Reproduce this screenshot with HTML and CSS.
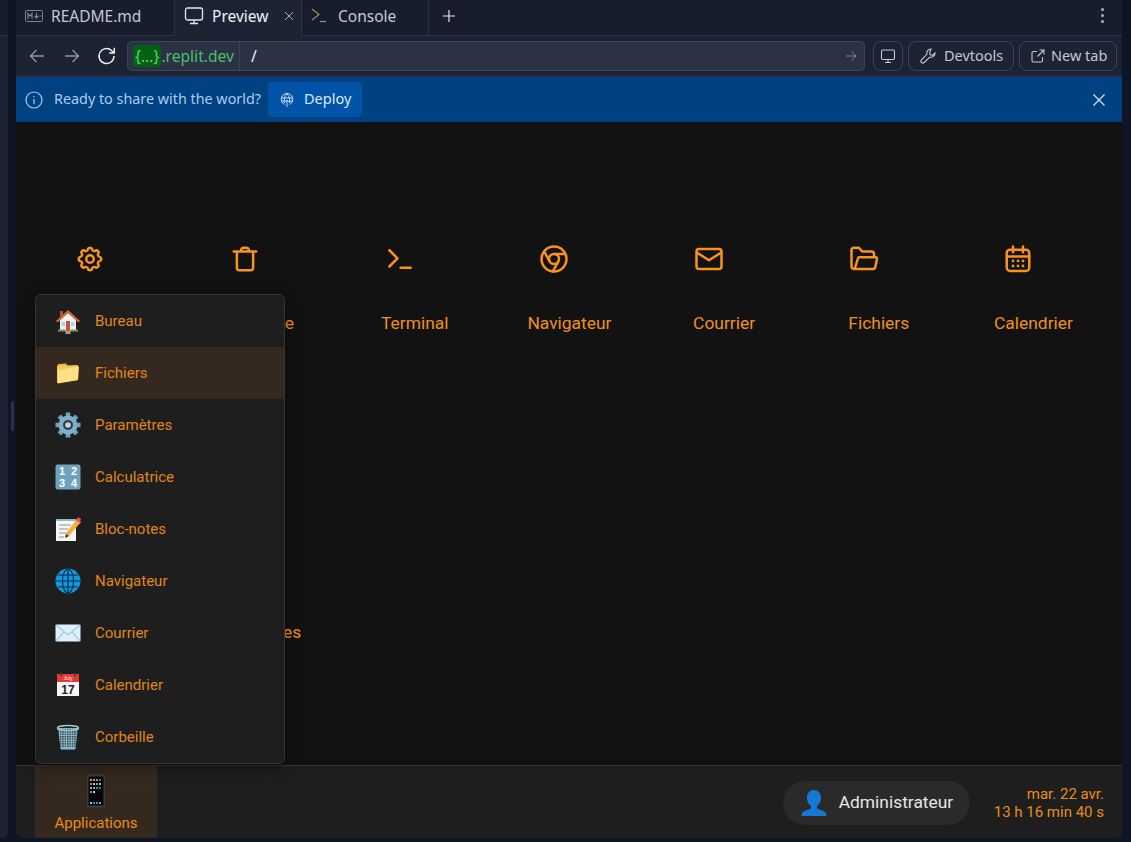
FILE: index.html
```html
<!DOCTYPE html>
<html lang="fr">
<head>
    <meta charset="UTF-8">
    <title>Preview</title>
    <link rel="stylesheet" href="styles.css">
</head>
<body>
    <svg width="0" height="0" class="defs">
        <defs>
            <symbol id="e-house" viewBox="0 0 26 26">
                <path d="M5 12 13 5l8 7v11H5z" fill="#eef1ee"/>
                <path d="M1 13 13 2l12 11-1.500 1.500L13 5 2.500 14.500z" fill="#d9683a"/>
                <path d="M5 3h3v4l-3 3z" fill="#b9502c"/>
                <path d="M6.500 14h3.500v4H6.500zM16 14h3.500v4H16z" fill="#a9d5e6"/>
                <path d="M11 13h4v10h-4z" fill="#c4573a"/>
                <path d="M3 21.500h7.500v2H3zM15.500 21.500H23v2h-7.500z" fill="#7a9a55"/>
                <path d="M10.500 23h5v3h-5z" fill="#9b9b9b"/>
            </symbol>
            <symbol id="e-folder" viewBox="0 0 26 26">
                <path d="M2 7 3 4l8-.500 2 2.500z" fill="#e9b44c"/>
                <path d="M2 6l21-1v15L2 23z" fill="#f5c85c"/>
                <path d="M3 10 24 6.500l-1 13.500-20 3.500z" fill="#ffe083"/>
            </symbol>
            <symbol id="e-gear" viewBox="0 0 26 26">
                <path d="M13 0.500v25M0.500 13h25M4.200 4.200l17.600 17.600M21.800 4.200 4.200 21.800" stroke="#6fa3bd" stroke-width="4.600"/>
                <circle cx="13" cy="13" r="9.500" fill="#7fb0c9"/>
                <circle cx="13" cy="13" r="5" fill="#2f3c44"/>
                <circle cx="13" cy="13" r="2.800" fill="#c6d6df"/>
            </symbol>
            <symbol id="e-numbers" viewBox="0 0 26 26">
                <rect x="0.500" y="0.500" width="25" height="25" rx="2" fill="#6fa3bd"/>
                <text x="7" y="11" class="emoji-digit">1</text>
                <text x="19" y="11" class="emoji-digit">2</text>
                <text x="7" y="23" class="emoji-digit">3</text>
                <text x="19" y="23" class="emoji-digit">4</text>
            </symbol>
            <symbol id="e-memo" viewBox="0 0 26 26">
                <path d="M1 3h20v22H1z" fill="#f4f6f8"/>
                <path d="M1 3h20v2H1z" fill="#8db9cf"/>
                <path d="M4 9h12M4 13h9M4 17h7M4 21h5" stroke="#8a939a" stroke-width="1"/>
                <path d="M10 22 11 17 22 3l4 3-12 14z" fill="#f5b03e"/>
                <path d="M21 4l2-3 3 2-2 4z" fill="#e2574c"/>
                <path d="M10 22l1-4 3 2z" fill="#3a3a3a"/>
            </symbol>
            <symbol id="e-globe" viewBox="0 0 26 26">
                <circle cx="13" cy="13" r="12.500" fill="#0a9be2"/>
                <g fill="none" stroke="#12243a" stroke-width="1.100">
                    <ellipse cx="13" cy="13" rx="5.500" ry="12"/>
                    <path d="M13 1v24M1 13h24M3 7h20M3 19h20"/>
                </g>
            </symbol>
            <symbol id="e-mail" viewBox="0 0 26 26">
                <rect x="0.500" y="4.500" width="25" height="17" rx="1" fill="#dff0fb"/>
                <path d="M1 5 13 15 25 5M1 21l8-9M25 21l-8-9" fill="none" stroke="#9cc9e6" stroke-width="1.200"/>
            </symbol>
            <symbol id="e-cal" viewBox="0 0 26 26">
                <path d="M2 2h22v22H2z" fill="#f5f5f5"/>
                <path d="M2 2h22v8H2z" fill="#e53935"/>
                <path d="M6 1v3M20 1v3" stroke="#37474f" stroke-width="2"/>
                <text x="13" y="8" class="emoji-month">July</text>
                <text x="13" y="21.500" class="emoji-day">17</text>
            </symbol>
            <symbol id="e-bin" viewBox="0 0 26 26">
                <pattern id="mesh" width="2.400" height="2.400" patternUnits="userSpaceOnUse">
                    <rect width="2.400" height="2.400" fill="#8fb8c8"/>
                    <rect width="1.400" height="1.400" fill="#26343c"/>
                </pattern>
                <path d="M3 4h20l-2.500 21h-15z" fill="url(#mesh)"/>
                <ellipse cx="13" cy="4" rx="10.500" ry="2.500" fill="none" stroke="#9cc7d6" stroke-width="1.600"/>
                <path d="M5.500 23h15l-.5 2.500H6z" fill="#86bccd"/>
            </symbol>
            <symbol id="e-phone" viewBox="0 0 26 34">
                <rect x="4" y="0.500" width="18" height="33" rx="2.500" fill="#3a3f44"/>
                <rect x="5.500" y="2.500" width="15" height="29" fill="#05070a"/>
                <g>
                    <path d="M7 5h2v2H7z" fill="#f59e2c"/><path d="M10 5h2v2h-2z" fill="#f5842c"/><path d="M13 5h2v2h-2z" fill="#f06a9c"/><path d="M16 5h2v2h-2z" fill="#1e88d0"/>
                    <path d="M7 9h2v2H7z" fill="#2ca7e0"/><path d="M10 9h2v2h-2z" fill="#7fd0ea"/><path d="M13 9h2v2h-2z" fill="#49b97a"/><path d="M16 9h2v2h-2z" fill="#f5b03e"/>
                    <path d="M7 13h2v2H7z" fill="#f59e2c"/><path d="M10 13h2v2h-2z" fill="#f06a9c"/><path d="M13 13h2v2h-2z" fill="#12a89a"/><path d="M16 13h2v2h-2z" fill="#1e88d0"/>
                    <path d="M7 17h2v2H7z" fill="#2ca7e0"/><path d="M10 17h2v2h-2z" fill="#9cd8ee"/>
                    <path d="M7 28h2v2H7z" fill="#7fd0ea"/><path d="M10 28h2v2h-2z" fill="#1e88d0"/><path d="M13 28h2v2h-2z" fill="#12a89a"/><path d="M16 28h2v2h-2z" fill="#f06a9c"/>
                </g>
            </symbol>
        </defs>
    </svg>

    <div class="rail"><div class="rail-head"></div></div>
    <div class="gutter"><span class="grip"></span></div>

    <div class="panel">
        <div class="tabs">
            <div class="tab">
                <svg class="tab-ico" width="20" height="20" viewBox="0 0 20 20" fill="none" stroke="#7e8694"><rect x="1.500" y="4.500" width="17" height="11" rx="1"/><path d="M4 13V7.500l2 2.500 2-2.500V13M12.500 7v5m-2-2 2 2 2-2M15.500 10h1.500" stroke-width="1.200"/></svg>
                <span>README.md</span>
            </div>
            <div class="tab tab-on">
                <svg class="tab-ico" width="20" height="20" viewBox="0 0 20 20" fill="none" stroke="#e4e7ec" stroke-width="1.300"><rect x="1.500" y="2" width="17" height="12" rx="2"/><path d="M10 14v3.500M6 17.500h8"/></svg>
                <span>Preview</span>
                <svg class="tab-x" width="10" height="10" viewBox="0 0 10 10" stroke="#aab1bd"><path d="M1 1l8 8M9 1l-8 8"/></svg>
            </div>
            <div class="tab tab-console">
                <svg class="tab-ico" width="20" height="20" viewBox="0 0 20 20" fill="none" stroke-width="1.200"><path d="M2 3l7 5.500-7 5.500" stroke="#a08d5c"/><path d="M10 15.500h6" stroke="#8a93a1"/></svg>
                <span>Console</span>
            </div>
            <div class="tab-plus">
                <svg width="12" height="12" viewBox="0 0 12 12" stroke="#e4e7ec" stroke-width="1.200"><path d="M6 0v12M0 6h12"/></svg>
            </div>
            <div class="tab-more">
                <span></span><span></span><span></span>
            </div>
        </div>

        <div class="toolbar">
            <button class="nav-btn">
                <svg width="16" height="16" viewBox="0 0 16 16" fill="none" stroke="#8f97a5" stroke-width="1.300"><path d="M15 8H1.500M7.500 2 1.500 8l6 6"/></svg>
            </button>
            <button class="nav-btn">
                <svg width="16" height="16" viewBox="0 0 16 16" fill="none" stroke="#8f97a5" stroke-width="1.300"><path d="M1 8h13.500M8.500 2l6 6-6 6"/></svg>
            </button>
            <button class="nav-btn">
                <svg width="20" height="20" viewBox="0 0 20 20" fill="none" stroke="#eef0f3" stroke-width="1.400"><path d="M17 10a7.500 7.500 0 1 1-2.200-5.300L17 7M17.300 1.800V7h-5.200"/></svg>
            </button>
            <div class="url">
                <div class="url-host"><span class="url-id">{...}</span>.replit.dev</div>
                <div class="url-path">/</div>
                <svg width="12" height="12" viewBox="0 0 12 12" fill="none" stroke="#7e8694"><path d="M1 6h10M6.500 1.500 11 6l-4.500 4.500"/></svg>
            </div>
            <button class="tool-btn tool-square">
                <svg width="16" height="16" viewBox="0 0 16 16" fill="none" stroke="#c2c8d2" stroke-width="1.100"><rect x="1.500" y="2" width="13" height="9.500" rx="1.500"/><path d="M8 11.500v3M5 14.500h6"/></svg>
            </button>
            <button class="tool-btn tool-dev">
                <svg width="16" height="16" viewBox="0 0 16 16" fill="none" stroke="#c2c8d2" stroke-width="1.100"><path d="M11 1a4 4 0 0 0-4 5.200L1.500 11.800a1.900 1.900 0 0 0 2.700 2.700l5.600-5.500A4 4 0 0 0 15 5l-2.500 2.300-2.300-.5-.5-2.300z"/></svg>
                <span>Devtools</span>
            </button>
            <button class="tool-btn tool-new">
                <svg width="14" height="14" viewBox="0 0 14 14" fill="none" stroke="#c2c8d2" stroke-width="1.100"><path d="M6 2.500H2.500a1.500 1.500 0 0 0-1.500 1.500v7.500A1.500 1.500 0 0 0 2.500 13H10a1.500 1.500 0 0 0 1.500-1.500V8M6.500 7.500 13 1M8.500 1H13v4.500"/></svg>
                <span>New tab</span>
            </button>
        </div>

        <div class="banner">
            <svg class="banner-info" width="18" height="18" viewBox="0 0 18 18" fill="none" stroke="#a9cdf0" stroke-width="1.200"><circle cx="9" cy="9" r="8"/><path d="M9 8v5M9 5v1.300"/></svg>
            <span class="banner-text">Ready to share with the world?</span>
            <button class="deploy">
                <svg width="14" height="14" viewBox="0 0 14 14" fill="none" stroke="#dbe9f7" stroke-width="0.900"><path d="M4.500 11.500A5.800 5.800 0 1 1 9.500 11.500"/><path d="M1.500 5h11M1.500 8h3M9.500 8h3M7 1C4.500 3 4 6 4.500 10M7 1c2.500 2 3 5 2.500 9"/><path d="M7 14V7M5 9l2-2 2 2"/></svg>
                <span>Deploy</span>
            </button>
            <svg class="banner-x" width="12" height="12" viewBox="0 0 12 12" stroke="#cfe3f7" stroke-width="1.300"><path d="M0.500 0.500l11 11M11.500 0.500l-11 11"/></svg>
        </div>

        <div class="os">
            <div class="desktop">
                <div class="shortcut">
                    <svg class="sc-ico" viewBox="0 0 24 24"><path d="M10.300 4.300c.4-1.800 3-1.800 3.400 0a1.700 1.700 0 0 0 2.600 1.100c1.500-.9 3.300.8 2.300 2.300a1.700 1.700 0 0 0 1.100 2.600c1.800.4 1.800 3 0 3.400a1.700 1.700 0 0 0-1.100 2.600c.9 1.500-.8 3.300-2.300 2.300a1.700 1.700 0 0 0-2.600 1.100c-.4 1.800-3 1.800-3.400 0a1.700 1.700 0 0 0-2.600-1.100c-1.500.9-3.300-.8-2.300-2.300a1.700 1.700 0 0 0-1.100-2.600c-1.800-.4-1.800-3 0-3.400a1.700 1.700 0 0 0 1.100-2.600c-.9-1.500.8-3.300 2.300-2.300a1.700 1.700 0 0 0 2.600-1.100z"/><circle cx="12" cy="12" r="3"/></svg>
                    <span>Paramètres</span>
                </div>
                <div class="shortcut">
                    <svg class="sc-ico" viewBox="0 0 24 24"><path d="M3 6h18M9 6V4.500A2 2 0 0 1 11 3h2a2 2 0 0 1 2 1.500V6M5.500 6v13a2 2 0 0 0 2 2h9a2 2 0 0 0 2-2V6"/></svg>
                    <span>Corbeille</span>
                </div>
                <div class="shortcut">
                    <svg class="sc-ico" viewBox="0 0 24 24"><path d="M3.500 5l6.500 6.500-6.500 6.500M12.500 19h8"/></svg>
                    <span>Terminal</span>
                </div>
                <div class="shortcut">
                    <svg class="sc-ico" viewBox="0 0 24 24"><circle cx="12" cy="12" r="10"/><circle cx="12" cy="12" r="4"/><path d="M12 8h9M8.500 14 4.200 6M15.500 14 11 22"/></svg>
                    <span>Navigateur</span>
                </div>
                <div class="shortcut">
                    <svg class="sc-ico" viewBox="0 0 24 24"><rect x="2" y="4" width="20" height="16" rx="2"/><path d="M2.500 7 12 13l9.500-6"/></svg>
                    <span>Courrier</span>
                </div>
                <div class="shortcut">
                    <svg class="sc-ico" viewBox="0 0 24 24"><path d="M4.500 20H19a2 2 0 0 0 2-1.500l1.300-6a1.500 1.500 0 0 0-1.500-2H9a2 2 0 0 0-2 1.500l-2.500 8zM4.500 20A2.500 2.500 0 0 1 2 18V5a2 2 0 0 1 2-2h4l2.500 3H18a2 2 0 0 1 2 2v2.500"/></svg>
                    <span>Fichiers</span>
                </div>
                <div class="shortcut">
                    <svg class="sc-ico" viewBox="0 0 24 24"><rect x="3" y="4.500" width="18" height="17" rx="2.500"/><path d="M3 10h18M8 2v4.500M16 2v4.500"/><path class="sc-dots" d="M8 13.500h.01M12 13.500h.01M16 13.500h.01M8 17.500h.01M12 17.500h.01M16 17.500h.01"/></svg>
                    <span>Calendrier</span>
                </div>
                <div class="shortcut shortcut-low"></div>
                <div class="shortcut shortcut-low">
                    <span>Bloc-notes</span>
                </div>
            </div>

            <div class="taskbar">
                <div class="start">
                    <svg class="start-ico" width="26" height="34"><use href="#e-phone"/></svg>
                    <span>Applications</span>
                </div>
                <div class="user">
                    <svg width="28" height="28" viewBox="0 0 28 28" fill="#1478d4"><path d="M14 1c4.500 0 7 3.500 7 8 0 3.500-1.500 6.500-4 8v2c0 1 5 2 8 4 1.500 1 1.500 3.500 1.500 4H1.500c0-.5 0-3 1.500-4 3-2 8-3 8-4v-2c-2.500-1.500-4-4.500-4-8 0-4.500 2.500-8 7-8z"/></svg>
                    <span>Administrateur</span>
                </div>
                <div class="clock">
                    <div>mar. 22 avr.</div>
                    <div>13 h 16 min 40 s</div>
                </div>
            </div>

            <div class="menu">
                <div class="menu-item"><svg class="emoji"><use href="#e-house"/></svg><span>Bureau</span></div>
                <div class="menu-item menu-on"><svg class="emoji"><use href="#e-folder"/></svg><span>Fichiers</span></div>
                <div class="menu-item"><svg class="emoji"><use href="#e-gear"/></svg><span>Paramètres</span></div>
                <div class="menu-item"><svg class="emoji"><use href="#e-numbers"/></svg><span>Calculatrice</span></div>
                <div class="menu-item"><svg class="emoji"><use href="#e-memo"/></svg><span>Bloc-notes</span></div>
                <div class="menu-item"><svg class="emoji"><use href="#e-globe"/></svg><span>Navigateur</span></div>
                <div class="menu-item"><svg class="emoji"><use href="#e-mail"/></svg><span>Courrier</span></div>
                <div class="menu-item"><svg class="emoji"><use href="#e-cal"/></svg><span>Calendrier</span></div>
                <div class="menu-item"><svg class="emoji"><use href="#e-bin"/></svg><span>Corbeille</span></div>
            </div>
        </div>
    </div>
</body>
</html>
```

FILE: styles.css
```css
* { box-sizing: border-box; }
html, body { height: 100%; }
body {
    margin: 0; display: flex; height: 842px; overflow: hidden;
    background: #0e1525; font-family: "Noto Sans", "Open Sans", sans-serif;
}
button { font-family: inherit; cursor: pointer; }
svg { flex: none; }
.defs { position: absolute; }

.rail { width: 8px; height: 838px; background: #1c2333; border-radius: 0 0 6px 0; }
.rail-head { height: 36px; background: #171d2d; border-bottom: 1px solid #2b3245; }
.gutter { width: 8px; display: flex; align-items: center; justify-content: center; padding-bottom: 10px; }
.grip { width: 3px; height: 30px; background: #2b3245; border-radius: 2px; }

.panel {
    width: 1106px; height: 838px; display: flex; flex-direction: column;
    background: #1c2333; border-radius: 0 0 6px 6px; overflow: hidden;
}

/* tab bar */
.tabs {
    height: 36px; flex: none; display: flex; align-items: stretch;
    background: #171d2d; border-bottom: 1px solid #2b3245; color: #c2c8d2; font-size: 15.5px;
}
.tab { display: flex; align-items: center; gap: 7px; padding-bottom: 4px; border-right: 1px solid #2b3245; }
.tab:first-child { width: 159px; padding-left: 8px; }
.tab-on {
    width: 127px; padding-left: 9px; gap: 8px; color: #f0f1f4;
    background: #1c2333; margin-bottom: -1px;
}
.tab-x { margin-left: 8px; }
.tab-console { width: 127px; padding-left: 8px; gap: 8px; }
.tab-plus { width: 40px; padding-bottom: 4px; display: flex; align-items: center; justify-content: center; }
.tab-more { margin-left: auto; width: 40px; padding-bottom: 4px; display: flex; flex-direction: column; align-items: center; justify-content: center; gap: 3px; }
.tab-more span { width: 3px; height: 3px; border-radius: 50%; background: #aab1bd; }

/* address bar */
.toolbar {
    height: 41px; flex: none; padding: 5px 5px 5px 3px; display: flex; align-items: center;
    background: #1c2333; border-bottom: 1px solid #2b3245;
}
.nav-btn { width: 35px; height: 30px; padding: 0; border: 0; background: none; display: flex; align-items: center; justify-content: center; }
.url {
    width: 738px; height: 30px; margin: 0 8px 0 3px; display: flex; align-items: center; padding-right: 7px;
    background: #2b3245; border: 1px solid #3c445c; border-radius: 5px; font-size: 15.6px;
}
.url-host { height: 100%; padding-left: 5px; padding-right: 5px; display: flex; align-items: center; color: #4ebe6a; border-right: 1px solid #3c445c; }
.url-id { height: 22px; padding: 0 2px; display: flex; align-items: center; background: #046113; border-radius: 4px; color: #58d672; }
.url-path { flex: 1; padding-left: 11px; color: #f0f1f4; }
.tool-btn {
    height: 30px; display: flex; align-items: center; background: none; padding: 0 11px; white-space: nowrap;
    border: 1px solid #3c445c; border-radius: 8px; color: #c2c8d2; font-size: 14.5px;
}
.tool-btn span { padding-bottom: 3px; }
.tool-square { width: 30px; padding: 0; justify-content: center; margin-right: 5px; }
.tool-dev { width: 106px; gap: 8px; margin-right: 5px; }
.tool-new { width: 98px; gap: 6px; }

/* deploy banner */
.banner {
    height: 45px; flex: none; display: flex; align-items: center; padding: 0 17px 0 9px;
    background: #004182; color: #a9cdf0; font-size: 14.35px;
}
.banner-info { margin-right: 11px; }
.banner-text { margin-right: 7px; padding-bottom: 3px; }
.deploy {
    height: 35px; width: 94px; display: flex; align-items: center; gap: 10px; padding: 0 0 0 12px;
    background: #0053a6; border: 0; border-radius: 4px; color: #dbe9f7; font-size: 14.5px;
}
.deploy span { padding-bottom: 3px; }
.banner-x { margin-left: auto; }

/* fake os */
.os { position: relative; flex: 1; min-height: 0; display: flex; flex-direction: column; background: #121212; font-family: Roboto, sans-serif; }
.desktop {
    flex: 1; min-height: 0; overflow: hidden; display: grid; grid-template-columns: repeat(7, 154.7px); grid-auto-rows: 309px;
    padding: 122px 0 0 12px; align-content: start; color: #f0901e; font-size: 17.4px;
}
.shortcut { display: flex; flex-direction: column; align-items: center; height: 90px; }
.shortcut > span:last-child { line-height: 20px; }
.sc-ico {
    width: 30px; height: 30px; margin: 0 30px 39px 0;
    fill: none; stroke: #f7931e; stroke-width: 2; stroke-linecap: round; stroke-linejoin: round;
}
.sc-dots { stroke-width: 2.200; }
.shortcut-low { padding-top: 69px; }

.taskbar {
    height: 73px; flex: none; display: flex; align-items: stretch; padding-left: 19px;
    background: #1e1e1e; border-top: 1px solid #333;
}
.start {
    width: 122px; display: flex; flex-direction: column; align-items: center; padding-top: 8px;
    background: #35291f; color: #ea8c1c; font-size: 15px;
}
.start-ico { margin-bottom: 6px; }
.user {
    width: 187px; height: 44px; margin: 15px 24px 0 auto; display: flex; align-items: center; gap: 11px; padding-left: 17px;
    background: #2a2a2a; border-radius: 22px; color: #e6e6e6; font-size: 17.4px;
}
.user span { padding-bottom: 2px; }
.clock { margin: 19px 18px 0 0; text-align: right; color: #ea8c1c; font-size: 15px; line-height: 18px; }

.menu {
    position: absolute; left: 19px; top: 172px; width: 250px;
    background: #1e1e1e; border: 1px solid #333; border-radius: 6px; overflow: hidden;
    box-shadow: 0 4px 16px rgba(0, 0, 0, 0.4); color: #e0861c; font-size: 15px;
}
.menu-item { height: 52px; display: flex; align-items: center; padding-left: 19px; gap: 14px; }
.menu-on { background: #35291f; }
.emoji { width: 26px; height: 26px; flex: none; }
.emoji-digit { font: bold 11px "Liberation Sans", sans-serif; fill: #fff; text-anchor: middle; }
.emoji-month { font: 5px "Liberation Sans", sans-serif; fill: #fff; text-anchor: middle; }
.emoji-day { font: bold 12px "Liberation Sans", sans-serif; fill: #222; text-anchor: middle; }
```
